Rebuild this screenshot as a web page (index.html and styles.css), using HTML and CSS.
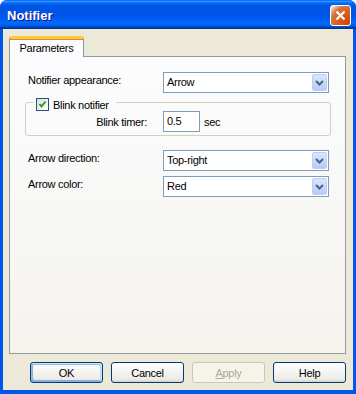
FILE: index.html
```html
<!DOCTYPE html>
<html lang="en">
<head>
    <meta charset="UTF-8">
    <meta name="viewport" content="width=device-width, initial-scale=1.0">
    <title>Notifier</title>
    <link rel="stylesheet" href="styles.css">
</head>
<body>
    <div class="window">
        <!-- title bar -->
        <div class="titlebar">
            <span class="title">Notifier</span>
            <button class="close" aria-label="Close">
                <svg width="11" height="11" viewBox="0 0 11 11">
                    <path d="M1.5 1.5 L9.5 9.5 M9.5 1.5 L1.5 9.5" stroke="#fff" stroke-width="2.2" fill="none"/>
                </svg>
            </button>
        </div>

        <div class="dialog">
            <!-- tabs -->
            <div class="tabs">
                <div class="tab active">Parameters</div>
            </div>

            <div class="panel">
                <div class="row first">
                    <label class="label">Notifier appearance:</label>
                    <div class="combo">
                        <span class="combo-text">Arrow</span>
                        <span class="combo-btn">
                            <svg width="9" height="6" viewBox="0 0 9 6"><polyline points="1,1 4.5,4.5 8,1" stroke="#4d6185" stroke-width="2" fill="none"/></svg>
                        </span>
                    </div>
                </div>

                <fieldset class="group">
                    <legend class="group-title">
                        <span class="legend-inner">
                            <span class="check">
                                <svg width="11" height="11" viewBox="0 0 11 11"><polyline points="2.5,5 4.5,7.5 8.5,2.5" stroke="#21a121" stroke-width="2" fill="none"/></svg>
                            </span>
                            Blink notifier
                        </span>
                    </legend>
                    <div class="timer-row">
                        <label class="timer-label">Blink timer:</label>
                        <div class="textbox">0.5</div>
                        <span class="unit">sec</span>
                    </div>
                </fieldset>

                <div class="row spaced">
                    <label class="label">Arrow direction:</label>
                    <div class="combo">
                        <span class="combo-text">Top-right</span>
                        <span class="combo-btn">
                            <svg width="9" height="6" viewBox="0 0 9 6"><polyline points="1,1 4.5,4.5 8,1" stroke="#4d6185" stroke-width="2" fill="none"/></svg>
                        </span>
                    </div>
                </div>

                <div class="row close-row">
                    <label class="label">Arrow color:</label>
                    <div class="combo">
                        <span class="combo-text">Red</span>
                        <span class="combo-btn">
                            <svg width="9" height="6" viewBox="0 0 9 6"><polyline points="1,1 4.5,4.5 8,1" stroke="#4d6185" stroke-width="2" fill="none"/></svg>
                        </span>
                    </div>
                </div>
            </div>

            <!-- buttons -->
            <div class="buttons">
                <button class="btn default">OK</button>
                <button class="btn">Cancel</button>
                <button class="btn disabled"><u>A</u>pply</button>
                <button class="btn">Help</button>
            </div>
        </div>
    </div>
</body>
</html>
```

FILE: styles.css
```css
html, body {
    margin: 0;
    padding: 0;
    background: #ffffff;
}
body {
    font-family: "Liberation Sans", Arial, sans-serif;
    font-size: 11px;
    letter-spacing: -0.3px;
    color: #000;
}
.window {
    width: 356px;
    height: 394px;
    box-sizing: border-box;
    display: flex;
    flex-direction: column;
    background: #0055ea;
    border-radius: 7px 7px 0 0;
    overflow: hidden;
}
/* Title bar */
.titlebar {
    height: 29px;
    flex: none;
    display: flex;
    align-items: center;
    justify-content: space-between;
    padding: 0 5px 0 7px;
    background: linear-gradient(to bottom, #0058ee 0%, #3593ff 4%, #288eff 6%, #127dff 8%, #036ffc 10%, #0262ee 14%, #0057e5 20%, #0054e3 24%, #0055eb 56%, #005bf5 66%, #026afe 76%, #0062ef 86%, #0052d6 92%, #0040ab 94%, #003092 100%);
}
.title {
    font-weight: bold;
    font-size: 13px;
    letter-spacing: 0;
    color: #fff;
    text-shadow: 1px 1px #0f1089;
    padding-top: 1px;
}
.close {
    width: 21px;
    height: 21px;
    padding: 0;
    border: 1px solid #fff;
    border-radius: 3px;
    background: radial-gradient(circle at 90% 90%, #cc4600 0%, #dc6527 55%, #cd7546 70%, #ffccb2 90%, #fff 100%);
    display: flex;
    align-items: center;
    justify-content: center;
    margin-top: 1px;
}
/* Dialog body */
.dialog {
    flex: 1;
    display: flex;
    flex-direction: column;
    background: #ece9d8;
    margin: 0 3px 4px 3px;
    padding: 7px 7px 7px 6px;
}
.tabs {
    display: flex;
    height: 21px;
    position: relative;
    z-index: 1;
    margin-bottom: -1px;
}
.tab {
    width: 75px;
    box-sizing: border-box;
    border: 1px solid #919b9c;
    border-bottom: none;
    border-top: 3px solid #ffc83c;
    border-radius: 3px 3px 0 0;
    background: #fcfcfe;
    text-align: center;
    line-height: 18px;
    box-shadow: inset 0 1px #e68b2c;
}
.panel {
    flex: 1;
    border: 1px solid #919b9c;
    background: linear-gradient(to bottom, #fcfcfe, #f4f3ee);
    display: flex;
    flex-direction: column;
}
.row {
    display: flex;
    align-items: flex-start;
    padding-left: 18px;
    margin-right: 16px;
}
.row.first {
    margin-top: 15px;
}
.row.spaced {
    margin-top: 14px;
}
.row.close-row {
    margin-top: 5px;
}
.label {
    width: 135px;
    line-height: 13px;
    padding-top: 2px;
}
.combo {
    flex: 1;
    height: 21px;
    box-sizing: border-box;
    border: 1px solid #7f9db9;
    background: #fff;
    padding: 1px;
    display: flex;
    align-items: center;
}
.combo-text {
    flex: 1;
    padding-left: 2px;
    line-height: 13px;
}
.combo-btn {
    width: 15px;
    height: 17px;
    box-sizing: border-box;
    border: 1px solid #bccdf7;
    border-radius: 2px;
    background: linear-gradient(to bottom, #dae6fe, #b7cbf7);
    display: flex;
    align-items: center;
    justify-content: center;
}
/* Group box */
.group {
    margin: 1px 14px 0 15px;
    padding: 0 0 3px 0;
    border: 1px solid #d0d0bf;
    border-radius: 3px;
    min-inline-size: 0;
}
.group-title {
    margin-left: 8px;
    padding: 4px 7px 0 2px;
}
.legend-inner {
    display: flex;
    align-items: center;
    gap: 4px;
    height: 13px;
}
.check {
    width: 13px;
    height: 13px;
    box-sizing: border-box;
    border: 1px solid #1c5180;
    background: linear-gradient(135deg, #dcdcd7, #fff);
    display: flex;
    align-items: center;
    justify-content: center;
}
.timer-row {
    display: flex;
    align-items: center;
}
.timer-label {
    width: 121px;
    text-align: right;
    margin-right: 16px;
}
.textbox {
    width: 37px;
    height: 21px;
    box-sizing: border-box;
    border: 1px solid #7f9db9;
    background: #fff;
    padding-left: 3px;
    line-height: 19px;
}
.unit {
    margin-left: 4px;
}
/* Buttons */
.buttons {
    display: flex;
    justify-content: flex-end;
    gap: 8px;
    margin-top: 8px;
}
.btn {
    width: 73px;
    height: 21px;
    padding: 0;
    font-family: inherit;
    font-size: 11px;
    letter-spacing: -0.3px;
    color: #000;
    border: 1px solid #003c74;
    border-radius: 3px;
    background: linear-gradient(180deg, #fff, #ecebe6 86%, #d6d0c5);
}
.btn.default {
    box-shadow: inset -1px 1px #cee7ff, inset 1px 2px #98b8ea, inset -2px 2px #bcd4f6, inset 1px -1px #89ade4, inset 2px -2px #89ade4;
}
.btn.disabled {
    border-color: #c9c7ba;
    background: #f5f4ea;
    color: #aca899;
}
```
